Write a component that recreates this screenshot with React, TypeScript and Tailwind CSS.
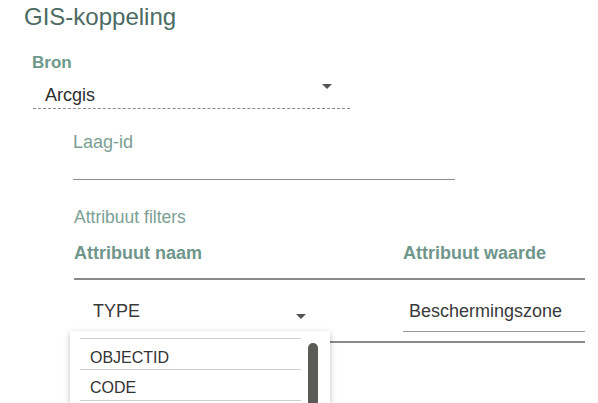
import React from 'react';

const Caret: React.FC<{ className?: string }> = ({ className }) => (
  <svg width="10" height="5" viewBox="0 0 10 5" className={className}>
    <path d="M0 0 L10 0 L5 5 Z" fill="#555552" />
  </svg>
);

const options = ['OBJECTID', 'CODE'];

const App: React.FC = () => {
  return (
    <div className="w-[598px] h-[403px] overflow-hidden bg-white font-[family-name:'Liberation_Sans',Arial,sans-serif]">
      <h1 className="pl-[24px] pt-[5px] text-[24px] leading-[24px] text-[#4b6b63]">GIS-koppeling</h1>

      {/* Bron */}
      <div className="ml-[32px] mt-[24px] text-[17px] leading-[20px] font-bold text-[#6d998c]">Bron</div>
      <div className="ml-[33px] w-[317px] flex justify-between items-start pt-[11px] pb-[2px] border-b border-dashed border-[#8a8a8a]">
        <span className="pl-[12px] text-[18px] leading-[22px] text-[#2f2f2f]">Arcgis</span>
        <Caret className="mr-[18px] mt-0" />
      </div>

      {/* Laag-id */}
      <div className="ml-[73px] mt-[23px] text-[18px] leading-[20px] text-[#7ba094]">Laag-id</div>
      <div className="ml-[73px] w-[382px] h-[28px] border-b border-[#8c8c8c]" />

      {/* Attribuut filters */}
      <div className="ml-[74px] mt-[27px] text-[17.5px] leading-[20px] text-[#7ba094]">Attribuut filters</div>
      <div className="ml-[74px] mt-[16px] w-[511px] flex pb-[15px] border-b-2 border-[#8a8a8a] text-[18px] leading-[20px] font-bold text-[#6f968b]">
        <span className="w-[329px]">Attribuut naam</span>
        <span>Attribuut waarde</span>
      </div>

      <div className="relative ml-[73px] w-[512px] flex pb-[9px] border-b-2 border-[#8a8a8a]">
        <div className="w-[253px] flex justify-between items-start pt-[20px] pb-[7px] border-b border-[#8c8c8c]">
          <span className="pl-[20px] text-[18px] leading-[22px] text-[#3a3a3a]">TYPE</span>
          <Caret className="mr-[20px] mt-[14px]" />
        </div>
        <div className="ml-[77px] w-[182px] pt-[20px] pb-[7px] border-b border-[#9a9a9a]">
          <span className="pl-[6px] text-[18px] leading-[22px] text-[#3a3a3a]">Beschermingszone</span>
        </div>

        {/* open dropdown */}
        <div className="absolute left-[-3px] top-[51px] w-[260px] h-[120px] bg-white shadow-[0_2px_6px_rgba(0,0,0,0.25)] z-10">
          <div className="mt-[7px] ml-[10px] w-[221px] border-t border-[#cfcfcf]">
            {options.map((o, i) => (
              <div
                key={o}
                className={`h-[31px] ${i === 0 ? 'pt-[9px]' : 'pt-[8px]'} pl-[10px] border-b border-[#cfcfcf] text-[16px] leading-[20px] text-[#333]`}
              >
                {o}
              </div>
            ))}
          </div>
          <div className="absolute left-[238px] top-[12px] w-[10px] h-[120px] rounded-full bg-[#5b5b57]" />
        </div>
      </div>
    </div>
  );
};

export default App;
